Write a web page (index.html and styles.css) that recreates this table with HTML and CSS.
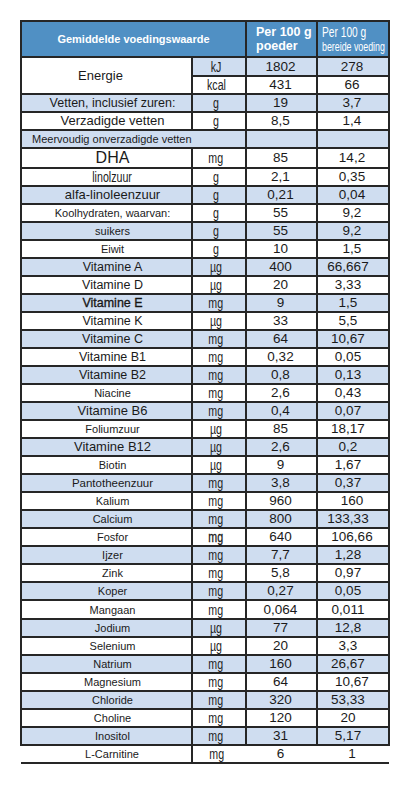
FILE: index.html
```html
<!DOCTYPE html>
<html lang="nl">

<head>
  <meta charset="UTF-8">
  <meta name="viewport" content="width=device-width, initial-scale=1.0">
  <title>Voedingswaarde</title>
  <link rel="stylesheet" href="styles.css">
</head>

<body>
  <div class="page">
    <table class="tbl">
      <colgroup>
        <col class="c1">
        <col class="c2">
        <col class="c3">
        <col class="c4">
      </colgroup>
      <thead>
        <tr class="head">
          <th colspan="2" class="h-title">Gemiddelde voedingswaarde</th>
          <th class="h-powder">Per 100 g<br>poeder</th>
          <th class="h-ready"><span class="nar r1">Per 100 g</span><br><span class="nar r2">bereide voeding</span></th>
        </tr>
      </thead>
      <tbody>
        <tr class="tall">
          <td rowspan="2" class="l s13 energy">Energie</td>
          <td class="u alt"><span class="nar">kJ</span></td>
          <td class="v alt">1802</td>
          <td class="v alt">278</td>
        </tr>
        <tr>
          <td class="u"><span class="nar">kcal</span></td>
          <td class="v">431</td>
          <td class="v">66</td>
        </tr>
        <tr class="alt">
          <td class="l s12">Vetten, inclusief zuren:</td>
          <td class="u"><span class="nar">g</span></td>
          <td class="v">19</td>
          <td class="v">3,7</td>
        </tr>
        <tr>
          <td class="l s13">Verzadigde vetten</td>
          <td class="u"><span class="nar">g</span></td>
          <td class="v">8,5</td>
          <td class="v">1,4</td>
        </tr>
        <tr class="alt">
          <td colspan="2" class="sub">Meervoudig onverzadigde vetten</td>
          <td class="v"></td>
          <td class="v"></td>
        </tr>
        <tr class="dha">
          <td class="l s16">DHA</td>
          <td class="u"><span class="nar">mg</span></td>
          <td class="v">85</td>
          <td class="v">14,2</td>
        </tr>
        <tr>
          <td class="l s14"><span class="nar">linolzuur</span></td>
          <td class="u"><span class="nar">g</span></td>
          <td class="v">2,1</td>
          <td class="v">0,35</td>
        </tr>
        <tr class="alt">
          <td class="l s13">alfa-linoleenzuur</td>
          <td class="u"><span class="nar">g</span></td>
          <td class="v">0,21</td>
          <td class="v">0,04</td>
        </tr>
        <tr>
          <td class="l">Koolhydraten, waarvan:</td>
          <td class="u"><span class="nar">g</span></td>
          <td class="v">55</td>
          <td class="v">9,2</td>
        </tr>
        <tr class="alt">
          <td class="l">suikers</td>
          <td class="u"><span class="nar">g</span></td>
          <td class="v">55</td>
          <td class="v">9,2</td>
        </tr>
        <tr>
          <td class="l">Eiwit</td>
          <td class="u"><span class="nar">g</span></td>
          <td class="v">10</td>
          <td class="v">1,5</td>
        </tr>
        <tr class="alt">
          <td class="l s12">Vitamine A</td>
          <td class="u"><span class="nar">µg</span></td>
          <td class="v">400</td>
          <td class="v vit">66,667</td>
        </tr>
        <tr>
          <td class="l s12">Vitamine D</td>
          <td class="u"><span class="nar">µg</span></td>
          <td class="v">20</td>
          <td class="v vit">3,33</td>
        </tr>
        <tr class="alt">
          <td class="l s12 dark">Vitamine E</td>
          <td class="u"><span class="nar">mg</span></td>
          <td class="v">9</td>
          <td class="v vit">1,5</td>
        </tr>
        <tr>
          <td class="l s12">Vitamine K</td>
          <td class="u"><span class="nar">µg</span></td>
          <td class="v">33</td>
          <td class="v vit">5,5</td>
        </tr>
        <tr class="alt">
          <td class="l s12">Vitamine C</td>
          <td class="u"><span class="nar">mg</span></td>
          <td class="v">64</td>
          <td class="v vit">10,67</td>
        </tr>
        <tr>
          <td class="l s12">Vitamine B1</td>
          <td class="u"><span class="nar">mg</span></td>
          <td class="v">0,32</td>
          <td class="v vit">0,05</td>
        </tr>
        <tr class="alt">
          <td class="l s12">Vitamine B2</td>
          <td class="u"><span class="nar">mg</span></td>
          <td class="v">0,8</td>
          <td class="v vit">0,13</td>
        </tr>
        <tr>
          <td class="l">Niacine</td>
          <td class="u"><span class="nar">mg</span></td>
          <td class="v">2,6</td>
          <td class="v vit">0,43</td>
        </tr>
        <tr class="alt">
          <td class="l s13">Vitamine B6</td>
          <td class="u"><span class="nar">mg</span></td>
          <td class="v">0,4</td>
          <td class="v vit">0,07</td>
        </tr>
        <tr>
          <td class="l">Foliumzuur</td>
          <td class="u"><span class="nar">µg</span></td>
          <td class="v">85</td>
          <td class="v vit">18,17</td>
        </tr>
        <tr class="alt">
          <td class="l s13">Vitamine B12</td>
          <td class="u"><span class="nar">µg</span></td>
          <td class="v">2,6</td>
          <td class="v vit">0,2</td>
        </tr>
        <tr>
          <td class="l">Biotin</td>
          <td class="u"><span class="nar">µg</span></td>
          <td class="v">9</td>
          <td class="v vit">1,67</td>
        </tr>
        <tr class="alt">
          <td class="l s115">Pantotheenzuur</td>
          <td class="u"><span class="nar">mg</span></td>
          <td class="v">3,8</td>
          <td class="v vit">0,37</td>
        </tr>
        <tr>
          <td class="l">Kalium</td>
          <td class="u"><span class="nar">mg</span></td>
          <td class="v">960</td>
          <td class="v">160</td>
        </tr>
        <tr class="alt">
          <td class="l">Calcium</td>
          <td class="u"><span class="nar">mg</span></td>
          <td class="v">800</td>
          <td class="v vit">133,33</td>
        </tr>
        <tr>
          <td class="l">Fosfor</td>
          <td class="u dark"><span class="nar">mg</span></td>
          <td class="v">640</td>
          <td class="v">106,66</td>
        </tr>
        <tr class="alt">
          <td class="l">Ijzer</td>
          <td class="u"><span class="nar">mg</span></td>
          <td class="v">7,7</td>
          <td class="v vit">1,28</td>
        </tr>
        <tr>
          <td class="l">Zink</td>
          <td class="u"><span class="nar">mg</span></td>
          <td class="v">5,8</td>
          <td class="v vit">0,97</td>
        </tr>
        <tr class="alt">
          <td class="l">Koper</td>
          <td class="u"><span class="nar">mg</span></td>
          <td class="v">0,27</td>
          <td class="v vit">0,05</td>
        </tr>
        <tr class="tall">
          <td class="l">Mangaan</td>
          <td class="u"><span class="nar">mg</span></td>
          <td class="v">0,064</td>
          <td class="v vit">0,011</td>
        </tr>
        <tr class="alt">
          <td class="l">Jodium</td>
          <td class="u"><span class="nar">µg</span></td>
          <td class="v">77</td>
          <td class="v vit">12,8</td>
        </tr>
        <tr>
          <td class="l">Selenium</td>
          <td class="u"><span class="nar">µg</span></td>
          <td class="v">20</td>
          <td class="v vit">3,3</td>
        </tr>
        <tr class="alt">
          <td class="l">Natrium</td>
          <td class="u"><span class="nar">mg</span></td>
          <td class="v">160</td>
          <td class="v vit">26,67</td>
        </tr>
        <tr>
          <td class="l">Magnesium</td>
          <td class="u"><span class="nar">mg</span></td>
          <td class="v">64</td>
          <td class="v">10,67</td>
        </tr>
        <tr class="alt">
          <td class="l">Chloride</td>
          <td class="u"><span class="nar">mg</span></td>
          <td class="v">320</td>
          <td class="v vit">53,33</td>
        </tr>
        <tr>
          <td class="l">Choline</td>
          <td class="u"><span class="nar">mg</span></td>
          <td class="v">120</td>
          <td class="v vit">20</td>
        </tr>
        <tr class="alt">
          <td class="l">Inositol</td>
          <td class="u"><span class="nar">mg</span></td>
          <td class="v">31</td>
          <td class="v vit">5,17</td>
        </tr>
        <tr class="last">
          <td class="l">L-Carnitine</td>
          <td class="u"><span class="nar">mg</span></td>
          <td class="v">6</td>
          <td class="v">1</td>
        </tr>
      </tbody>
    </table>
  </div>
</body>

</html>
```

FILE: styles.css
```css
* {
  margin: 0;
  padding: 0;
  box-sizing: border-box;
}

body {
  background-color: #fff;
  font-family: "Liberation Sans", Arial, sans-serif;
  color: #1a1a1a;
}

.page {
  padding: 20px 0 0 20px;
}

.tbl {
  width: 368px;
  table-layout: fixed;
  border-collapse: collapse;
}

.c1 {
  width: 171px;
}

.c2 {
  width: 54px;
}

.c3 {
  width: 71px;
}

.c4 {
  width: 72px;
}

.tbl th,
.tbl td {
  border: 2px solid #262626;
  height: 18px;
  line-height: 14px;
  vertical-align: middle;
  white-space: nowrap;
}

/* smalle letters (geen condensed font beschikbaar) */
.nar {
  display: inline-block;
  transform: scaleX(0.76);
}

/* kop */
.head th {
  height: 36px;
  background-color: #5090c4;
  color: #fff;
}

.h-title {
  font-size: 11px;
  font-weight: bold;
  text-align: center;
}

.h-powder {
  font-size: 12.5px;
  font-weight: bold;
  text-align: left;
  padding-left: 9px;
}

.h-ready {
  font-weight: normal;
  text-align: left;
  padding-left: 4px;
  line-height: 16px;
}

.h-ready .nar {
  transform: scaleX(0.68);
  transform-origin: left center;
}

.h-ready .r1 {
  font-size: 15px;
}

.h-ready .r2 {
  font-size: 13px;
}

/* rijen */
.alt td,
td.alt {
  background-color: #cfddf0;
}

.tall td {
  height: 19px;
}

.dha td {
  height: 20px;
}

.l {
  font-size: 11px;
  text-align: center;
  padding-left: 12px;
}

.s115 {
  font-size: 11.5px;
}

.s12 {
  font-size: 12.5px;
}

.s13 {
  font-size: 13px;
}

.s14 {
  font-size: 14px;
}

.s16 {
  font-size: 16px;
}

.energy {
  padding-left: 0;
  padding-right: 12px;
}

.dark {
  -webkit-text-stroke: 0.3px #111;
}

.sub {
  font-size: 11px;
  text-align: left;
  padding-left: 10px;
}

.u {
  font-size: 14px;
  text-align: center;
  padding-right: 6px;
  color: #222;
}

.v {
  font-size: 13.5px;
  text-align: center;
  padding-right: 2px;
}

.v.vit {
  padding-right: 10px;
}

/* laatste rij zonder zijranden */
.last td {
  border-left: none;
  border-right: none;
}

.last td.l {
  border-right: 2px solid #262626;
}
```
